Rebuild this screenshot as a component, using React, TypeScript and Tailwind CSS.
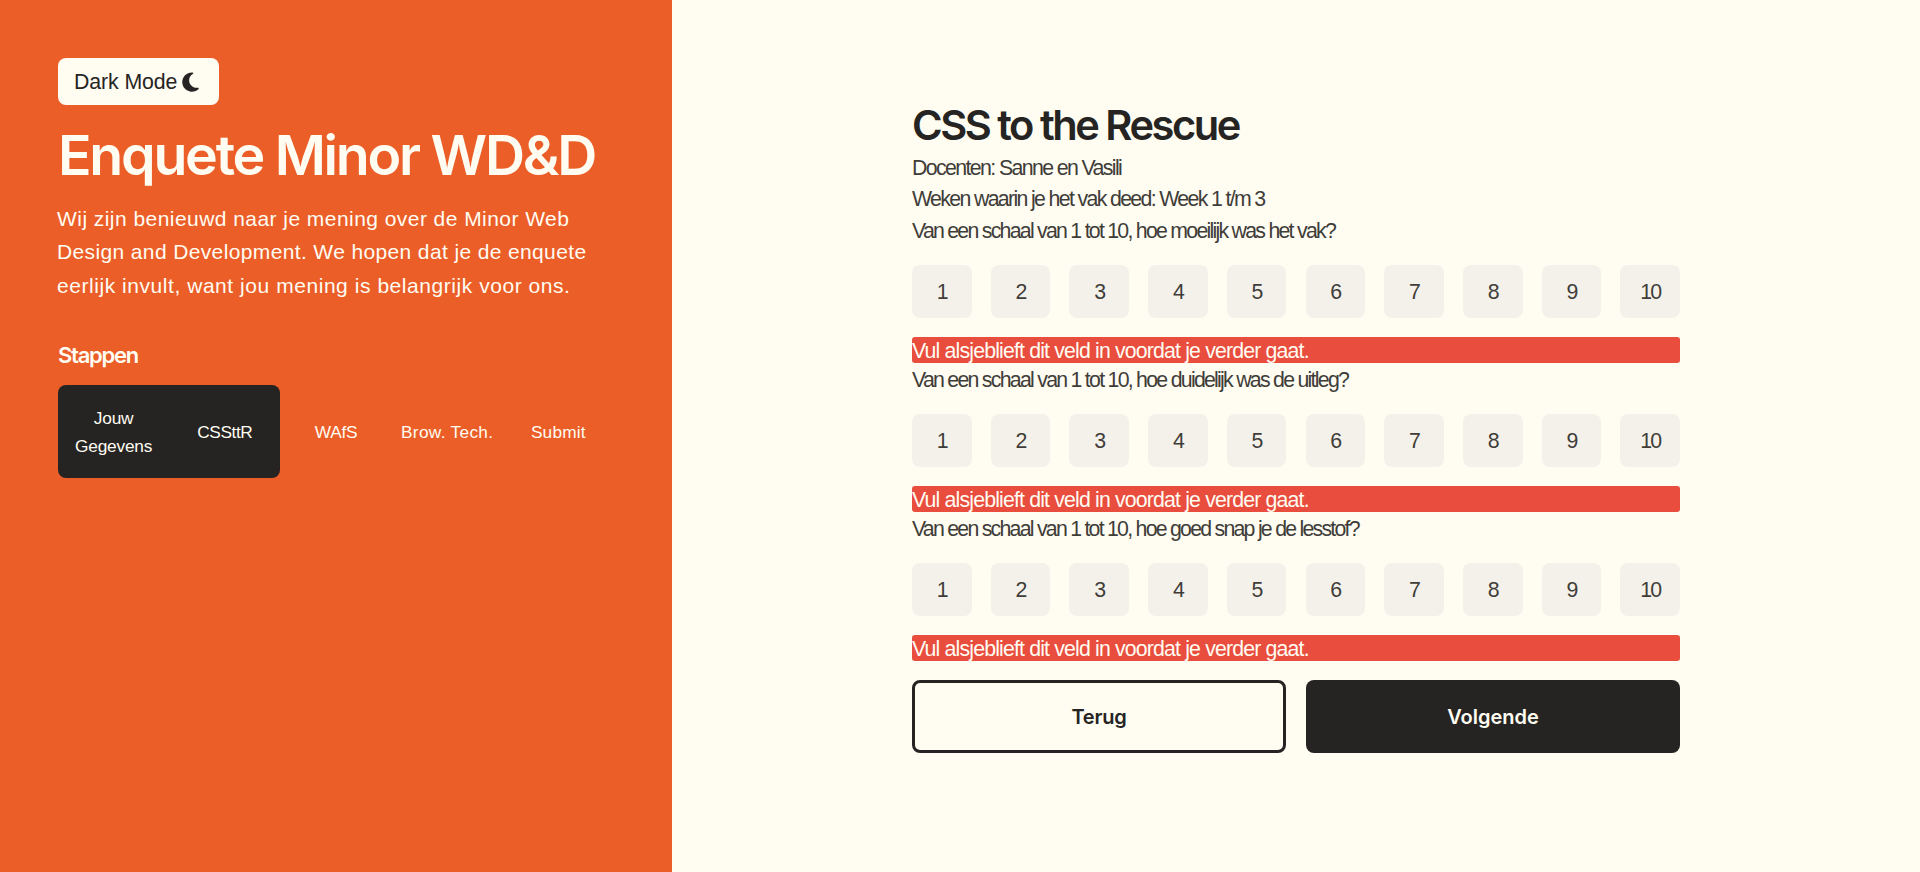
import { FaMoon } from 'react-icons/fa6';

const steps = [
  { label: 'Jouw Gegevens', active: true, tracking: 'tracking-[-0.2px]' },
  { label: 'CSSttR', active: true, tracking: 'tracking-[-0.4px]' },
  { label: 'WAfS', active: false, tracking: 'tracking-[-0.3px]' },
  { label: 'Brow. Tech.', active: false, tracking: 'tracking-[0.3px]' },
  { label: 'Submit', active: false, tracking: 'tracking-[0.2px]' },
];

const questions = [
  { text: 'Van een schaal van 1 tot 10, hoe moeilijk was het vak?', tracking: 'tracking-[-1.74px]' },
  { text: 'Van een schaal van 1 tot 10, hoe duidelijk was de uitleg?', tracking: 'tracking-[-1.73px]' },
  { text: 'Van een schaal van 1 tot 10, hoe goed snap je de lesstof?', tracking: 'tracking-[-1.75px]' },
];

const scores = [1, 2, 3, 4, 5, 6, 7, 8, 9, 10];

function Sidebar() {
  return (
    <aside className="w-[672px] shrink-0 bg-[#eb5e28] p-[58px] text-[#fffcf2]">
      <button className="flex h-[47px] w-[161px] items-center rounded-lg bg-[#fffcf2] pl-4 text-[21.3px] text-[#252422]">
        <span className="pt-[2px] tracking-[-0.1px] whitespace-nowrap">Dark Mode</span>
        <FaMoon className="ml-[5px] h-[22px] w-[17px]" />
      </button>
      <h1 className="mt-[17px] font-[Inter,sans-serif] text-[55.5px] font-semibold leading-[66px] tracking-[-2.27px] whitespace-nowrap">
        Enquete Minor WD&amp;D
      </h1>
      <p className="-ml-px mt-[14px] text-[21px] leading-[33.3px] whitespace-nowrap">
        <span className="block tracking-[0.45px]">Wij zijn benieuwd naar je mening over de Minor Web</span>
        <span className="block tracking-[0.37px]">Design and Development. We hopen dat je de enquete</span>
        <span className="block tracking-[0.55px]">eerlijk invult, want jou mening is belangrijk voor ons.</span>
      </p>
      <h2 className="mt-[38px] font-[Inter,sans-serif] text-[22px] font-semibold leading-[30px] tracking-[-1.25px]">
        Stappen
      </h2>
      <ol className="mt-[15px] grid h-[93px] grid-cols-5 overflow-hidden rounded-lg">
        {steps.map((step, i) => (
          <li
            key={step.label}
            className={`flex items-center justify-center px-4 pt-[2px] text-center text-[17.3px] leading-7 ${step.tracking} ${
              step.active ? 'bg-[#252422]' : ''
            } ${i === 1 ? 'rounded-r-lg' : ''}`}
          >
            <span className={i === 0 ? '' : 'whitespace-nowrap'}>{step.label}</span>
          </li>
        ))}
      </ol>
    </aside>
  );
}

function Question({ text, tracking }: { text: string; tracking: string }) {
  return (
    <div>
      <p className={`h-8 pt-px leading-8 whitespace-nowrap ${tracking}`}>{text}</p>
      <div className="mt-[19px] flex gap-[19.2px]">
        {scores.map((n) => (
          <button
            key={n}
            className="h-[52.8px] flex-1 rounded-lg bg-[#f4f1eb] pt-[3px] text-center tracking-[-1.77px]"
          >
            {n}
          </button>
        ))}
      </div>
      <p className="mt-[19.2px] h-[26px] rounded-[3px] bg-[#e84d3d] leading-[29px] tracking-[-0.84px] whitespace-nowrap text-[#fffcf2]">
        Vul alsjeblieft dit veld in voordat je verder gaat.
      </p>
    </div>
  );
}

export default function App() {
  return (
    <div className="flex h-screen overflow-hidden bg-[#fffcf2] font-['Liberation_Sans',Arial,sans-serif]">
      <Sidebar />
      <main className="flex flex-1 justify-center pt-[100px]">
        <section className="w-[768px] text-[21.3px] text-[#403d39]">
          <h2 className="font-[Inter,sans-serif] text-[41.6px] font-semibold leading-[50px] tracking-[-2.48px] whitespace-nowrap text-[#252422]">
            CSS to the Rescue
          </h2>
          <p className="mt-[3px] leading-[31px] tracking-[-1.61px]">Docenten: Sanne en Vasili</p>
          <p className="-mb-px leading-[31px] tracking-[-1.65px]">Weken waarin je het vak deed: Week 1 t/m 3</p>
          {questions.map((q) => (
            <Question key={q.text} text={q.text} tracking={q.tracking} />
          ))}
          <div className="mt-[19px] grid h-[73px] grid-cols-2 gap-5 font-[Inter,sans-serif] text-xl font-semibold">
            <button className="rounded-lg border-3 border-[#252422] pt-[2px] tracking-[-0.2px] text-[#252422]">Terug</button>
            <button className="rounded-lg bg-[#252422] pt-[2px] text-[#fffcf2]">Volgende</button>
          </div>
        </section>
      </main>
    </div>
  );
}
